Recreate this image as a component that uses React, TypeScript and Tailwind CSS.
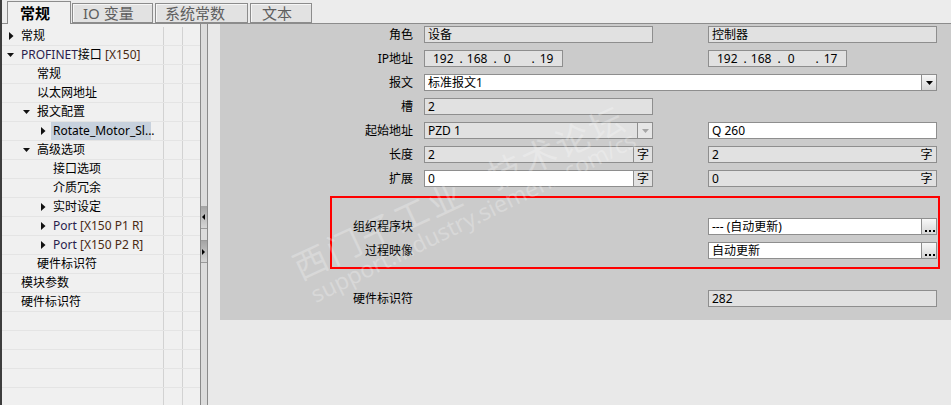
import React from "react";

type Node = {
  level: 0 | 1 | 2;
  arrow?: "right" | "down";
  text: React.ReactNode;
  selected?: boolean;
};

const textPad = ["pl-[19px]", "pl-[35px]", "pl-[51px]"];
const arrowPad = ["pl-[5px]", "pl-[21px]", "pl-[37px]"];

const port = (p: string) => (
  <>
    <span className="text-[#2a1d4d]">Port</span>{" "}
    <span className="text-[#4a2a14]">[X150 {p} R]</span>
  </>
);

const nodes: Node[] = [
  { level: 0, arrow: "right", text: "常规" },
  {
    level: 0,
    arrow: "down",
    text: (
      <>
        <span className="text-[#2a1d4d]">PROFINET</span>接口{" "}
        <span className="text-[#4a2a14]">[X150]</span>
      </>
    ),
  },
  { level: 1, text: "常规" },
  { level: 1, text: "以太网地址" },
  { level: 1, arrow: "down", text: "报文配置" },
  { level: 2, arrow: "right", text: "Rotate_Motor_Sl...", selected: true },
  { level: 1, arrow: "down", text: "高级选项" },
  { level: 2, text: "接口选项" },
  { level: 2, text: "介质冗余" },
  { level: 2, arrow: "right", text: "实时设定" },
  { level: 2, arrow: "right", text: port("P1") },
  { level: 2, arrow: "right", text: port("P2") },
  { level: 1, text: "硬件标识符" },
  { level: 0, text: "模块参数" },
  { level: 0, text: "硬件标识符" },
];

function Arrow({ dir }: { dir: "right" | "down" }) {
  return (
    <span className="flex w-[14px] shrink-0 items-center">
      {dir === "right" ? (
        <svg width="6" height="8" className="ml-[2px]">
          <path d="M0 0L4.5 4L0 8z" fill="#111" />
        </svg>
      ) : (
        <svg width="8" height="6">
          <path d="M0 1H7L3.5 5z" fill="#111" />
        </svg>
      )}
    </span>
  );
}

function TreeRow({ node }: { node?: Node }) {
  return (
    <div className="flex h-[19px] shrink-0 border-b border-[#e4e4e4]">
      <div className="flex w-[162px] items-center border-r border-[#d2d2d2]">
        {node && (
          <div className={`flex items-center ${node.arrow ? arrowPad[node.level] : textPad[node.level]}`}>
            {node.arrow && <Arrow dir={node.arrow} />}
            <span
              className={
                node.selected
                  ? "-ml-[2px] h-[18px] w-[100px] bg-[#c7d1dd] pl-[2px] leading-[18px] whitespace-nowrap"
                  : "whitespace-nowrap leading-[18px]"
              }
            >
              {node.text}
            </span>
          </div>
        )}
      </div>
      <div className="w-[19px] border-r border-[#d2d2d2]" />
      <div className="flex-1" />
    </div>
  );
}

function DropBtn({ disabled }: { disabled?: boolean }) {
  return (
    <div
      className={`flex h-full w-[15px] shrink-0 items-center justify-center border-l border-[#8e8e8e] ${
        disabled ? "bg-[#e6e6e6]" : "bg-gradient-to-b from-[#f8f8f8] to-[#d6d6d6]"
      }`}
    >
      <svg width="7" height="4">
        <path d="M0 0H7L3.5 4z" fill={disabled ? "#a6a6a6" : "#000"} />
      </svg>
    </div>
  );
}

function DotsBtn() {
  return (
    <div className="relative h-full w-[15px] shrink-0 border-l border-[#8e8e8e] bg-gradient-to-b from-[#f8f8f8] to-[#d6d6d6]">
      <div className="absolute bottom-[2px] left-[3px] flex gap-[2px]">
        <i className="h-[2px] w-[2px] bg-black" />
        <i className="h-[2px] w-[2px] bg-black" />
        <i className="h-[2px] w-[2px] bg-black" />
      </div>
    </div>
  );
}

function Field({
  w = "w-[229px]",
  white,
  children,
  unit,
  unitSep,
  drop,
  dropDisabled,
  dots,
}: {
  w?: string;
  white?: boolean;
  children?: React.ReactNode;
  unit?: boolean;
  unitSep?: boolean;
  drop?: boolean;
  dropDisabled?: boolean;
  dots?: boolean;
}) {
  return (
    <div
      className={`flex h-[17px] shrink-0 items-center overflow-hidden border border-[#8e8e8e] ${w} ${
        white ? "bg-white" : "bg-[#e1e1e1]"
      }`}
    >
      <div className="flex flex-1 items-center pl-[3px] text-[12px] leading-none whitespace-nowrap text-black">
        {children}
      </div>
      {unit && (
        <div
          className={`flex h-full w-[19px] items-center justify-center text-[12px] ${
            unitSep ? "border-l border-[#8e8e8e] bg-[#e1e1e1]" : ""
          }`}
        >
          字
        </div>
      )}
      {drop && <DropBtn disabled={dropDisabled} />}
      {dots && <DotsBtn />}
    </div>
  );
}

function Ip({ last }: { last: string }) {
  return (
    <>
      <span className="ml-[5px]">192</span>
      <span className="ml-[6px]">.</span>
      <span className="ml-[4px]">168</span>
      <span className="ml-[6px]">.</span>
      <span className="ml-[7px]">0</span>
      <span className="ml-[21px]">.</span>
      <span className="ml-[5px]">{last}</span>
    </>
  );
}

function Row({ label, children }: { label: string; children?: React.ReactNode }) {
  return (
    <div className="flex h-[17px] items-center">
      <div className="w-[193px] text-right text-[12px] leading-none text-black">{label}</div>
      <div className="ml-[11px] flex items-center">{children}</div>
    </div>
  );
}

function Gap() {
  return <div className="w-[55px] shrink-0" />;
}

export default function App() {
  return (
    <div className="relative flex h-[405px] w-[951px] overflow-hidden bg-[#ebebeb] font-['Noto_Sans','Noto_Sans_CJK_SC',sans-serif] text-black">
      <div className="w-[2px] shrink-0 bg-[#3d3d3d]" />
      <div className="flex flex-1 flex-col">
        {/* Tabs */}
        <div className="flex h-[24px] shrink-0 items-end gap-[1px] border-b border-[#8c8c8c] bg-[#ececec] pl-[5px]">
          <div className="-mb-px flex h-[23px] w-[64px] items-center border border-b-0 border-[#8c8c8c] bg-[#f0f0f0] pl-[12px] text-[15px] font-bold">
            常规
          </div>
          <div className="flex h-[20px] w-[81px] items-center border border-[#8c8c8c] bg-[#e2e2e2] pl-[10px] text-[15px] text-[#5e5e5e] shadow-[inset_1px_1px_0_#f6f6f6]">
            IO 变量
          </div>
          <div className="ml-[1px] flex h-[20px] w-[93px] items-center border border-[#8c8c8c] bg-[#e2e2e2] pl-[9px] text-[15px] text-[#5e5e5e] shadow-[inset_1px_1px_0_#f6f6f6]">
            系统常数
          </div>
          <div className="ml-[1px] flex h-[20px] w-[62px] items-center border border-[#8c8c8c] bg-[#e2e2e2] pl-[11px] text-[15px] text-[#5e5e5e] shadow-[inset_1px_1px_0_#f6f6f6]">
            文本
          </div>
        </div>

        <div className="flex flex-1">
          {/* Tree */}
          <div className="flex w-[198px] shrink-0 flex-col bg-[#f0f0f0] pt-[3px] text-[12px]">
            {Array.from({ length: 20 }).map((_, i) => (
              <TreeRow key={i} node={nodes[i]} />
            ))}
          </div>

          {/* Splitter */}
          <div className="flex w-[8px] shrink-0 flex-col border-x border-[#8a8a8a] bg-[#dcdcdc] pt-[182px]">
            <div className="flex h-[23px] items-center justify-center border-b border-[#9a9a9a] bg-gradient-to-b from-[#a4a4a4] to-[#d6d6d6]">
              <svg width="4" height="6">
                <path d="M3 0V6L0 3z" fill="#000" />
              </svg>
            </div>
            <div className="h-[11px]" />
            <div className="flex h-[23px] items-center justify-center border-y border-[#9a9a9a] bg-gradient-to-b from-[#a4a4a4] to-[#d6d6d6]">
              <svg width="4" height="6">
                <path d="M0 0V6L3 3z" fill="#000" />
              </svg>
            </div>
          </div>

          {/* Content */}
          <div className="flex-1 bg-[#e9e9e9] pl-[12px]">
            <div className="flex flex-col bg-[#cbcbcb] pt-[2px] pb-[13px]">
              <div className="flex flex-col gap-[7px]">
                <Row label="角色">
                  <Field>设备</Field>
                  <Gap />
                  <Field>控制器</Field>
                </Row>
                <Row label="IP地址">
                  <Field w="w-[139px]">
                    <Ip last="19" />
                  </Field>
                  <div className="w-[145px] shrink-0" />
                  <Field w="w-[139px]">
                    <Ip last="17" />
                  </Field>
                </Row>
                <Row label="报文">
                  <Field w="w-[513px]" white drop>
                    标准报文1
                  </Field>
                </Row>
                <Row label="槽">
                  <Field>2</Field>
                </Row>
                <Row label="起始地址">
                  <Field drop dropDisabled>
                    PZD 1
                  </Field>
                  <Gap />
                  <Field white>Q 260</Field>
                </Row>
                <Row label="长度">
                  <Field unit unitSep>
                    2
                  </Field>
                  <Gap />
                  <Field unit>2</Field>
                </Row>
                <Row label="扩展">
                  <Field white unit unitSep>
                    0
                  </Field>
                  <Gap />
                  <Field unit>0</Field>
                </Row>
              </div>

              {/* Highlighted block */}
              <div className="mt-[9px] ml-[110px] flex h-[73px] w-[610px] flex-col gap-[7px] border-2 border-[#ff0000] pt-[20px]">
                <div className="flex h-[17px] items-center">
                  <div className="w-[81px] text-right text-[12px] leading-none">组织程序块</div>
                  <div className="ml-auto mr-[1px]">
                    <Field white dots>
                      --- (自动更新)
                    </Field>
                  </div>
                </div>
                <div className="flex h-[17px] items-center">
                  <div className="w-[81px] text-right text-[12px] leading-none">过程映像</div>
                  <div className="ml-auto mr-[1px]">
                    <Field white dots>
                      自动更新
                    </Field>
                  </div>
                </div>
              </div>

              <div className="mt-[21px]">
                <Row label="硬件标识符">
                  <div className="w-[284px] shrink-0" />
                  <Field>282</Field>
                </Row>
              </div>
            </div>
          </div>
        </div>
      </div>

      {/* Forum watermark */}
      <div className="pointer-events-none absolute top-[252px] left-[295px] flex origin-left -rotate-[25deg] text-[34px] leading-none tracking-[3px] whitespace-nowrap text-white/25">
        <span>西门子工业</span>
        <span className="ml-[30px]">技术论坛</span>
      </div>
      <div className="pointer-events-none absolute top-[284px] left-[312px] origin-left -rotate-[26deg] text-[23px] leading-none whitespace-nowrap text-white/25">
        support.industry.siemens.com/cs
      </div>
    </div>
  );
}
